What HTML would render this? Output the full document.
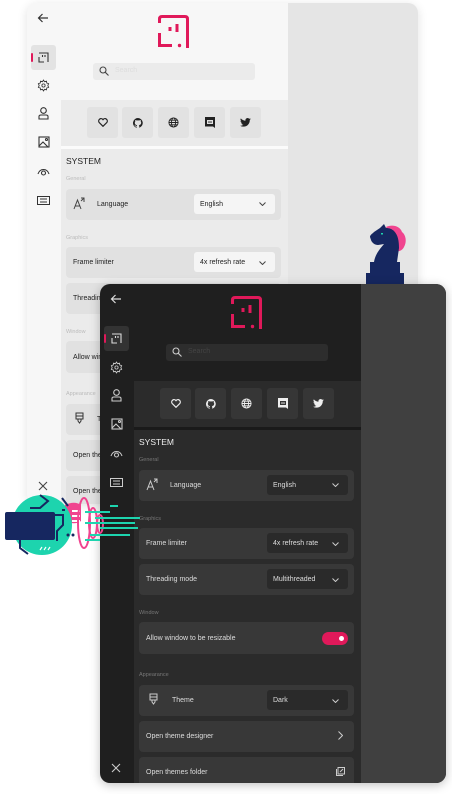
<!DOCTYPE html>
<html><head><meta charset="utf-8">
<style>
*{margin:0;padding:0;box-sizing:border-box}
body{width:452px;height:794px;background:#fff;position:relative;overflow:hidden;font-family:"Liberation Sans",sans-serif}
.win{position:absolute;border-radius:10px;overflow:hidden}
.win div,.win svg{position:absolute}
.L{left:27px;top:3px;width:391px;height:501px;background:#f7f7f7;box-shadow:0 2px 10px rgba(0,0,0,.12)}
.D{left:100px;top:284px;width:346px;height:499px;background:#1f1f1f;box-shadow:0 2px 10px rgba(0,0,0,.25)}
.right{left:261px;top:0;bottom:0;right:0}
.L .right{background:#e5e5e5}.D .right{background:#404040}
.band{left:34px;top:97px;width:227px;height:46px}
.L .band{background:#ebebeb}.D .band{background:#2b2b2b}
.sep{left:34px;top:143px;width:227px;height:3px}
.L .sep{background:#fbfbfb}.D .sep{background:#1a1a1a}
.sect{left:34px;top:146px;width:227px;bottom:0}
.L .sect{background:#ebebeb}.D .sect{background:#2b2b2b}
.btn{top:104px;width:31px;height:31px;border-radius:3px;display:flex;align-items:center;justify-content:center}
.L .btn{background:#e2e2e2}.D .btn{background:#363636}
.card{left:39px;width:215px;border-radius:4px;font-size:7px;display:flex;align-items:center}
.L .card{background:#e1e1e1;color:#222}.D .card{background:#383838;color:#ddd}
.lbl{left:39px;font-size:5.5px}
.L .lbl{color:#bbb}.D .lbl{color:#777}
.dd{left:167px;width:81px;height:20px;border-radius:3px;font-size:7px;display:flex;align-items:center;padding-left:6px}
.L .dd{background:#f5f5f5;color:#222}.D .dd{background:#2a2a2a;color:#ddd}
.srch{left:66px;top:60px;width:162px;height:17px;border-radius:3px;font-size:7px;padding:4px 0 0 22px}
.L .srch{background:#ebebeb;color:#ddd}.D .srch{background:#2d2d2d;color:#444}
.act{left:4px;top:42px;width:25px;height:25px;border-radius:3px}
.L .act{background:#e3e3e3}.D .act{background:#333}
.sys{left:39px;top:153px;font-size:8.5px}
.L .sys{color:#222}.D .sys{color:#eee}
</style></head><body>

<!-- LIGHT WINDOW -->
<div class="win L">
 <div class="right"></div>
 <div class="band"></div><div class="sep"></div><div class="sect"></div>
 <svg style="left:10px;top:10px" width="12" height="10" viewBox="0 0 12 10"><path d="M11 5H1.5M5.5 1L1.5 5l4 4" stroke="#333" stroke-width="1.2" fill="none"/></svg>
 <div class="act"></div><div style="left:4px;top:50px;width:2px;height:9px;background:#e0195a;border-radius:1px"></div>
 <svg style="left:11px;top:49px" width="11" height="11" viewBox="0 0 11 11" fill="none" stroke="#333" stroke-width="1.1"><path d="M1 1h9v9M1 5v5h5"/><path d="M4.5 3v2M7 3v2"/></svg>
 <svg style="left:10px;top:76px" width="13" height="13" viewBox="0 0 24 24" fill="none" stroke="#333" stroke-width="1.6"><circle cx="12" cy="12" r="3"/><path d="M12 2l2 3 3.5-1 .5 3.5 3.5 1-1.5 3.5 1.5 3.5-3.5 1-.5 3.5-3.5-1-2 3-2-3-3.5 1-.5-3.5-3.5-1L4 12 2.5 8.5l3.5-1L6.5 4 10 5z"/></svg>
 <svg style="left:11px;top:104px" width="11" height="13" viewBox="0 0 11 13" fill="none" stroke="#333" stroke-width="1.1"><circle cx="5.5" cy="3.5" r="2.8"/><path d="M1 12V9.5C1 8.5 2 8 3 8h5c1 0 2 .5 2 1.5V12z"/></svg>
 <svg style="left:11px;top:133px" width="12" height="12" viewBox="0 0 12 12" fill="none" stroke="#333" stroke-width="1.1"><rect x="1" y="1" width="10" height="10"/><path d="M1 10l4-4 5 5"/><circle cx="8.5" cy="3.5" r="1"/></svg>
 <svg style="left:10px;top:164px" width="13" height="9" viewBox="0 0 13 9" fill="none" stroke="#333" stroke-width="1.1"><path d="M1 7C3 1 10 1 12 7"/><circle cx="6.5" cy="6" r="2"/></svg>
 <svg style="left:10px;top:193px" width="13" height="9" viewBox="0 0 13 9" fill="none" stroke="#333" stroke-width="1"><rect x=".5" y=".5" width="12" height="8"/><path d="M3 3h7M3 6h7"/></svg>
 <svg style="left:11px;top:478px" width="10" height="10" viewBox="0 0 10 10"><path d="M1 1l8 8M9 1L1 9" stroke="#444" stroke-width="1.1"/></svg>
 <svg style="left:131px;top:12px" width="32" height="34" viewBox="0 0 32 34" fill="none" stroke="#e0195a" stroke-width="3"><path d="M1.5 8V4Q1.5 1.5 4 1.5H27Q29.5 1.5 29.5 4V33"/><path d="M1.5 18V30.5H14"/><path d="M12 12v4M19 9v8"/><circle cx="21.5" cy="30.5" r="1.7" fill="#e0195a" stroke="none"/></svg>
 <div class="srch">Search</div>
 <svg style="left:72px;top:63px" width="10" height="10" viewBox="0 0 10 10" fill="none" stroke="#444" stroke-width="1.1"><circle cx="4" cy="4" r="3"/><path d="M6.3 6.3L9.5 9.5"/></svg>
 <div class="btn" style="left:60px"><svg width="10" height="9" viewBox="0 0 10 9"><path d="M5 8.3L1.2 4.5A2.2 2.2 0 015 1.6a2.2 2.2 0 013.8 2.9z" fill="none" stroke="#222" stroke-width="1.2"/></svg></div>
 <div class="btn" style="left:95px"><svg width="10" height="10" viewBox="0 0 16 16"><path fill="#222" d="M8 0a8 8 0 00-2.5 15.6c.4 0 .5-.2.5-.4v-1.5c-2.2.5-2.7-1-2.7-1-.4-.9-.9-1.2-.9-1.2-.7-.5.1-.5.1-.5.8.1 1.2.8 1.2.8.7 1.3 1.9.9 2.3.7.1-.5.3-.9.5-1.1-1.8-.2-3.6-.9-3.6-4 0-.9.3-1.6.8-2.1-.1-.2-.4-1 .1-2.1 0 0 .7-.2 2.2.8a7.5 7.5 0 014 0c1.5-1 2.2-.8 2.2-.8.4 1.1.2 1.9.1 2.1.5.6.8 1.3.8 2.1 0 3.1-1.9 3.7-3.6 3.9.3.3.5.8.5 1.5v2.2c0 .2.1.5.6.4A8 8 0 008 0z"/></svg></div>
 <div class="btn" style="left:131px"><svg width="11" height="11" viewBox="0 0 12 12" fill="none" stroke="#222" stroke-width="1"><circle cx="6" cy="6" r="5"/><ellipse cx="6" cy="6" rx="2.2" ry="5"/><path d="M1 6h10M2 3.5h8M2 8.5h8"/></svg></div>
 <div class="btn" style="left:167px"><svg width="10" height="11" viewBox="0 0 10 11"><path d="M0 0h10v11L8 9.5H0z" fill="#222"/><rect x="2" y="3" width="6" height="4" fill="#e2e2e2"/><circle cx="4" cy="5" r=".8" fill="#222"/><circle cx="6" cy="5" r=".8" fill="#222"/></svg></div>
 <div class="btn" style="left:203px"><svg width="11" height="9" viewBox="0 0 24 20"><path fill="#222" d="M24 2.4c-.9.4-1.8.7-2.8.8 1-.6 1.8-1.6 2.2-2.7-1 .6-2 1-3.1 1.2A4.9 4.9 0 0011.9 6 14 14 0 011.7.8a4.9 4.9 0 001.5 6.6c-.8 0-1.6-.3-2.2-.6 0 2.4 1.7 4.4 3.9 4.8-.7.2-1.5.2-2.2.1.6 2 2.4 3.4 4.6 3.4A9.9 9.9 0 010 17.1 14 14 0 007.5 19.3c9.1 0 14-7.5 14-14v-.6c1-.7 1.8-1.6 2.5-2.3z"/></svg></div>
 <div class="sys">SYSTEM</div>
 <div class="lbl" style="top:173px">General</div>
 <div class="card" style="top:186px;height:31px;padding-left:31px">Language</div>
 <svg style="left:46px;top:194px" width="12" height="13" viewBox="0 0 12 13" fill="none" stroke="#444" stroke-width="1"><path d="M1 12L4.5 3 8 12M2.3 9h4.5M8 1h3v4M11 1L8 4"/></svg>
 <div class="dd" style="top:191px">English</div>
 <svg style="left:232px;top:199px" width="7" height="4" viewBox="0 0 7 4"><path d="M.5.5L3.5 3.5 6.5.5" stroke="#444" fill="none"/></svg>
 <div class="lbl" style="top:232px">Graphics</div>
 <div class="card" style="top:244px;height:31px;padding-left:7px">Frame limiter</div>
 <div class="dd" style="top:249px">4x refresh rate</div>
 <svg style="left:232px;top:258px" width="7" height="4" viewBox="0 0 7 4"><path d="M.5.5L3.5 3.5 6.5.5" stroke="#444" fill="none"/></svg>
 <div class="card" style="top:280px;height:31px;padding-left:7px">Threading mode</div>
 <div class="lbl" style="top:326px">Window</div>
 <div class="card" style="top:338px;height:32px;padding-left:7px">Allow window to be resizable</div>
 <div class="lbl" style="top:388px">Appearance</div>
 <div class="card" style="top:401px;height:31px;padding-left:31px">Theme</div>
 <svg style="left:48px;top:409px" width="9" height="12" viewBox="0 0 9 12" fill="none" stroke="#333" stroke-width="1"><path d="M1 1h7v6H1zM3 7v2l1.5 2L6 9V7M1 4h7"/></svg>
 <div class="card" style="top:437px;height:31px;padding-left:7px">Open theme designer</div>
 <div class="card" style="top:473px;height:31px;padding-left:7px">Open themes folder</div>
</div>

<!-- knight -->
<svg style="position:absolute;left:366px;top:223px" width="42" height="62" viewBox="0 0 42 62">
 <path d="M20 4c6-3 14-1 16 5 4 3 5 10 2 15-2 4-6 5-9 4z" fill="#f0448f"/>
 <path d="M18 1l2 4c3 0 6 1 8 3 4 4 5 10 5 17l-2 14h3v11h4v12H0V50h4V39h4c1-7 5-12 10-18l-6 1c-3 0-6-2-7-5l-1-3c0-2 2-3 4-5l6-4z" fill="#162760"/>
 <rect x="15" y="10" width="2" height="1.5" fill="#1dd4ae"/>
</svg>

<!-- DARK WINDOW -->
<div class="win D">
 <div class="right"></div>
 <div class="band"></div><div class="sep"></div><div class="sect"></div>
 <svg style="left:10px;top:10px" width="12" height="10" viewBox="0 0 12 10"><path d="M11 5H1.5M5.5 1L1.5 5l4 4" stroke="#ddd" stroke-width="1.2" fill="none"/></svg>
 <div class="act"></div><div style="left:4px;top:50px;width:2px;height:9px;background:#e0195a;border-radius:1px"></div>
 <svg style="left:11px;top:49px" width="11" height="11" viewBox="0 0 11 11" fill="none" stroke="#ddd" stroke-width="1.1"><path d="M1 1h9v9M1 5v5h5"/><path d="M4.5 3v2M7 3v2"/></svg>
 <svg style="left:10px;top:77px" width="13" height="13" viewBox="0 0 24 24" fill="none" stroke="#ccc" stroke-width="1.6"><circle cx="12" cy="12" r="3"/><path d="M12 2l2 3 3.5-1 .5 3.5 3.5 1-1.5 3.5 1.5 3.5-3.5 1-.5 3.5-3.5-1-2 3-2-3-3.5 1-.5-3.5-3.5-1L4 12 2.5 8.5l3.5-1L6.5 4 10 5z"/></svg>
 <svg style="left:11px;top:105px" width="11" height="13" viewBox="0 0 11 13" fill="none" stroke="#ccc" stroke-width="1.1"><circle cx="5.5" cy="3.5" r="2.8"/><path d="M1 12V9.5C1 8.5 2 8 3 8h5c1 0 2 .5 2 1.5V12z"/></svg>
 <svg style="left:11px;top:134px" width="12" height="12" viewBox="0 0 12 12" fill="none" stroke="#ccc" stroke-width="1.1"><rect x="1" y="1" width="10" height="10"/><path d="M1 10l4-4 5 5"/><circle cx="8.5" cy="3.5" r="1"/></svg>
 <svg style="left:10px;top:165px" width="13" height="9" viewBox="0 0 13 9" fill="none" stroke="#ccc" stroke-width="1.1"><path d="M1 7C3 1 10 1 12 7"/><circle cx="6.5" cy="6" r="2"/></svg>
 <svg style="left:10px;top:194px" width="13" height="9" viewBox="0 0 13 9" fill="none" stroke="#ccc" stroke-width="1"><rect x=".5" y=".5" width="12" height="8"/><path d="M3 3h7M3 6h7"/></svg>
 <svg style="left:11px;top:479px" width="10" height="10" viewBox="0 0 10 10"><path d="M1 1l8 8M9 1L1 9" stroke="#ccc" stroke-width="1.1"/></svg>
 <svg style="left:131px;top:12px" width="32" height="34" viewBox="0 0 32 34" fill="none" stroke="#e0195a" stroke-width="3"><path d="M1.5 8V4Q1.5 1.5 4 1.5H27Q29.5 1.5 29.5 4V33"/><path d="M1.5 18V30.5H14"/><path d="M12 12v4M19 9v8"/><circle cx="21.5" cy="30.5" r="1.7" fill="#e0195a" stroke="none"/></svg>
 <div class="srch">Search</div>
 <svg style="left:72px;top:63px" width="10" height="10" viewBox="0 0 10 10" fill="none" stroke="#ccc" stroke-width="1.1"><circle cx="4" cy="4" r="3"/><path d="M6.3 6.3L9.5 9.5"/></svg>
 <div class="btn" style="left:60px"><svg width="10" height="9" viewBox="0 0 10 9"><path d="M5 8.3L1.2 4.5A2.2 2.2 0 015 1.6a2.2 2.2 0 013.8 2.9z" fill="none" stroke="#eee" stroke-width="1.2"/></svg></div>
 <div class="btn" style="left:95px"><svg width="10" height="10" viewBox="0 0 16 16"><path fill="#eee" d="M8 0a8 8 0 00-2.5 15.6c.4 0 .5-.2.5-.4v-1.5c-2.2.5-2.7-1-2.7-1-.4-.9-.9-1.2-.9-1.2-.7-.5.1-.5.1-.5.8.1 1.2.8 1.2.8.7 1.3 1.9.9 2.3.7.1-.5.3-.9.5-1.1-1.8-.2-3.6-.9-3.6-4 0-.9.3-1.6.8-2.1-.1-.2-.4-1 .1-2.1 0 0 .7-.2 2.2.8a7.5 7.5 0 014 0c1.5-1 2.2-.8 2.2-.8.4 1.1.2 1.9.1 2.1.5.6.8 1.3.8 2.1 0 3.1-1.9 3.7-3.6 3.9.3.3.5.8.5 1.5v2.2c0 .2.1.5.6.4A8 8 0 008 0z"/></svg></div>
 <div class="btn" style="left:131px"><svg width="11" height="11" viewBox="0 0 12 12" fill="none" stroke="#eee" stroke-width="1"><circle cx="6" cy="6" r="5"/><ellipse cx="6" cy="6" rx="2.2" ry="5"/><path d="M1 6h10M2 3.5h8M2 8.5h8"/></svg></div>
 <div class="btn" style="left:167px"><svg width="10" height="11" viewBox="0 0 10 11"><path d="M0 0h10v11L8 9.5H0z" fill="#eee"/><rect x="2" y="3" width="6" height="4" fill="#363636"/><circle cx="4" cy="5" r=".8" fill="#eee"/><circle cx="6" cy="5" r=".8" fill="#eee"/></svg></div>
 <div class="btn" style="left:203px"><svg width="11" height="9" viewBox="0 0 24 20"><path fill="#eee" d="M24 2.4c-.9.4-1.8.7-2.8.8 1-.6 1.8-1.6 2.2-2.7-1 .6-2 1-3.1 1.2A4.9 4.9 0 0011.9 6 14 14 0 011.7.8a4.9 4.9 0 001.5 6.6c-.8 0-1.6-.3-2.2-.6 0 2.4 1.7 4.4 3.9 4.8-.7.2-1.5.2-2.2.1.6 2 2.4 3.4 4.6 3.4A9.9 9.9 0 010 17.1 14 14 0 007.5 19.3c9.1 0 14-7.5 14-14v-.6c1-.7 1.8-1.6 2.5-2.3z"/></svg></div>
 <div class="sys">SYSTEM</div>
 <div class="lbl" style="top:173px">General</div>
 <div class="card" style="top:186px;height:31px;padding-left:31px">Language</div>
 <svg style="left:46px;top:194px" width="12" height="13" viewBox="0 0 12 13" fill="none" stroke="#ccc" stroke-width="1"><path d="M1 12L4.5 3 8 12M2.3 9h4.5M8 1h3v4M11 1L8 4"/></svg>
 <div class="dd" style="top:191px">English</div>
 <svg style="left:232px;top:199px" width="7" height="4" viewBox="0 0 7 4"><path d="M.5.5L3.5 3.5 6.5.5" stroke="#ccc" fill="none"/></svg>
 <div class="lbl" style="top:232px">Graphics</div>
 <div class="card" style="top:244px;height:31px;padding-left:7px">Frame limiter</div>
 <div class="dd" style="top:249px">4x refresh rate</div>
 <svg style="left:232px;top:258px" width="7" height="4" viewBox="0 0 7 4"><path d="M.5.5L3.5 3.5 6.5.5" stroke="#ccc" fill="none"/></svg>
 <div class="card" style="top:280px;height:31px;padding-left:7px">Threading mode</div>
 <div class="dd" style="top:285px">Multithreaded</div>
 <svg style="left:232px;top:294px" width="7" height="4" viewBox="0 0 7 4"><path d="M.5.5L3.5 3.5 6.5.5" stroke="#ccc" fill="none"/></svg>
 <div class="lbl" style="top:326px">Window</div>
 <div class="card" style="top:338px;height:32px;padding-left:7px">Allow window to be resizable</div>
 <div style="left:222px;top:348px;width:26px;height:13px;border-radius:7px;background:#e0195a"></div>
 <div style="left:239px;top:352px;width:5px;height:5px;border-radius:50%;background:#fff"></div>
 <div class="lbl" style="top:388px">Appearance</div>
 <div class="card" style="top:401px;height:31px;padding-left:33px">Theme</div>
 <svg style="left:49px;top:409px" width="9" height="12" viewBox="0 0 9 12" fill="none" stroke="#ccc" stroke-width="1"><path d="M1 1h7v6H1zM3 7v2l1.5 2L6 9V7M1 4h7"/></svg>
 <div class="dd" style="top:406px">Dark</div>
 <svg style="left:232px;top:415px" width="7" height="4" viewBox="0 0 7 4"><path d="M.5.5L3.5 3.5 6.5.5" stroke="#ccc" fill="none"/></svg>
 <div class="card" style="top:437px;height:31px;padding-left:7px">Open theme designer</div>
 <svg style="left:238px;top:447px" width="5" height="9" viewBox="0 0 5 9"><path d="M.5.5l4 4-4 4" stroke="#ccc" fill="none"/></svg>
 <div class="card" style="top:473px;height:31px;padding-left:7px">Open themes folder</div>
 <svg style="left:236px;top:483px" width="9" height="9" viewBox="0 0 9 9" fill="none" stroke="#ccc" stroke-width="1"><rect x="2" y=".5" width="6.5" height="6.5"/><path d="M.5 2v6.5H7M4 5l3-3"/></svg>
</div>

<!-- mascot -->
<svg style="position:absolute;left:0;top:490px" width="140" height="70" viewBox="0 0 140 70">
 <path d="M65 15c6-3 12-3 16 0v16c-4 3-10 3-16 0z" fill="#f0448f"/>
 <circle cx="42" cy="35" r="30" fill="#1dd4ae"/>
 <rect x="5" y="22" width="50" height="28" rx="2" fill="#162760"/>
 <path d="M40 5l8 6-8 7H30M55 25h8v10l-6 6v10M20 50v8l8 6M62 20h3M62 8l6 8" stroke="#162760" stroke-width="2" fill="none"/>
 <circle cx="68" cy="45" r="1.5" fill="#162760"/><circle cx="73" cy="45" r="1.5" fill="#162760"/>
 <path d="M40 60l2-3M44 60l2-3M48 60l2-3" stroke="#fff" stroke-width="1.2"/>
 <rect x="72" y="20" width="8" height="2" fill="#fff"/><rect x="72" y="25" width="8" height="2" fill="#fff"/><rect x="72" y="30" width="8" height="2" fill="#fff"/>
 <ellipse cx="84" cy="33" rx="6" ry="25" fill="none" stroke="#f0448f" stroke-width="2"/>
 <ellipse cx="93" cy="33" rx="4" ry="15" fill="none" stroke="#f0448f" stroke-width="2"/>
 <ellipse cx="100" cy="34" rx="3" ry="9" fill="none" stroke="#f0448f" stroke-width="2"/>
 <path d="M110 16h8M95 28h50M85 33h50M100 38h38M90 45h40M85 50h15M85 22h25" stroke="#1dd4ae" stroke-width="2"/>
</svg>
</body></html>
